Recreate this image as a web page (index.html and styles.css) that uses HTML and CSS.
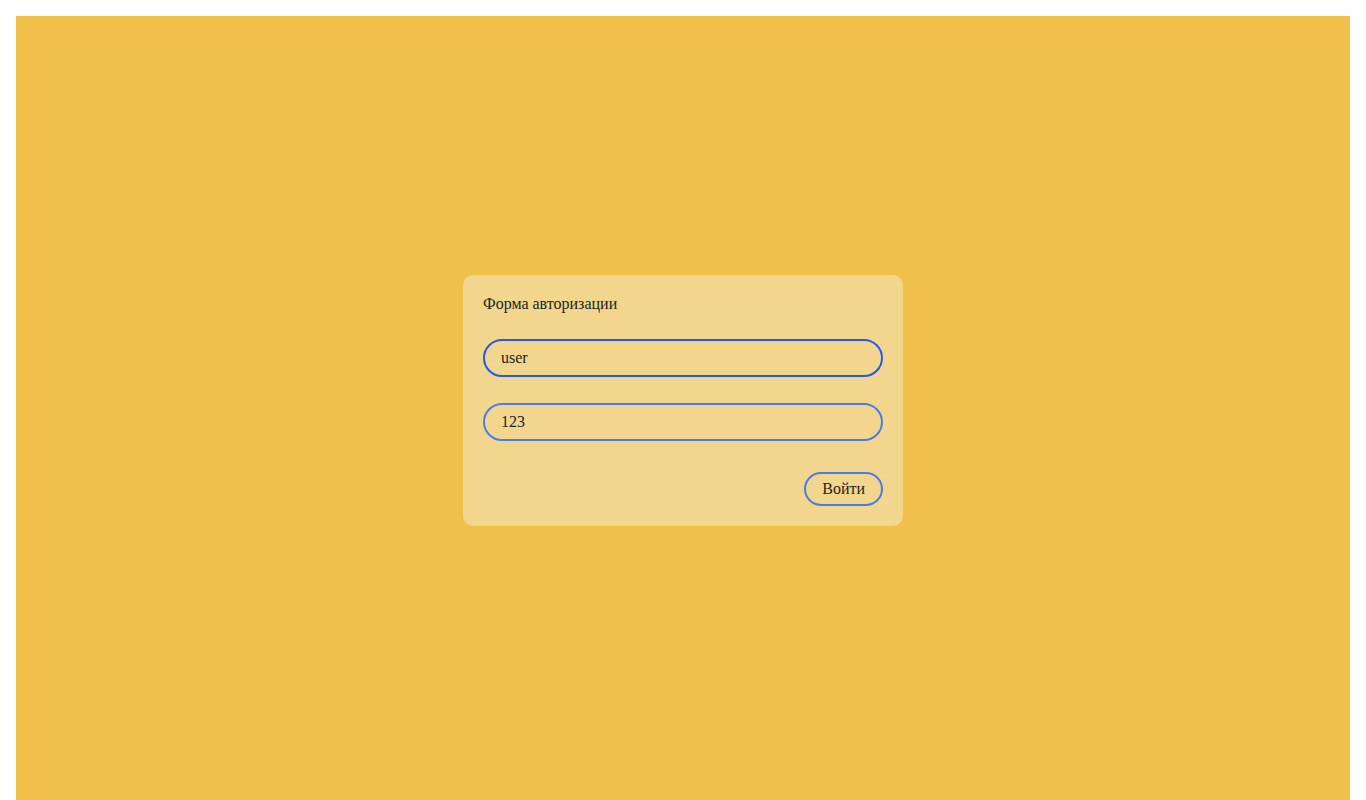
FILE: index.html
```html
<!DOCTYPE html>
<html lang="ru">
<head>
<meta charset="utf-8">
<title>Авторизация</title>
<link rel="stylesheet" href="styles.css">
</head>
<body>
<div class="page">
  <form class="card">
    <div class="title">Форма авторизации</div>
    <input class="field field-focus" type="text" value="user">
    <input class="field" type="text" value="123">
    <div class="actions">
      <button type="button" class="btn">Войти</button>
    </div>
  </form>
</div>
</body>
</html>
```
FILE: styles.css
```css
html, body {
  overflow: hidden;
}
body {
  margin: 16px 16px 0;
  font-family: "Liberation Serif", "Times New Roman", serif;
  font-size: 16px;
  color: #1e1e1e;
}
.page {
  box-sizing: border-box;
  min-height: calc(100vh - 16px);
  padding-bottom: 15px;
  background: #f0c04a;
  display: flex;
  align-items: center;
  justify-content: center;
}
.card {
  width: 440px;
  box-sizing: border-box;
  padding: 20px;
  background: #f2d68e;
  border-radius: 10px;
  display: flex;
  flex-direction: column;
  gap: 26px;
  margin: 0;
}
.title {
  line-height: 18.4px;
}
.field {
  box-sizing: border-box;
  width: 100%;
  height: 38px;
  padding: 8px 16px;
  border: 2px solid #4a7de8;
  border-radius: 19px;
  background: transparent;
  font: inherit;
  color: inherit;
  outline: none;
  margin: 0;
}
.field-focus {
  border-color: #2459ea;
}
.actions {
  display: flex;
  justify-content: flex-end;
  margin-top: 5px;
}
.btn {
  box-sizing: border-box;
  height: 34px;
  padding: 6px 16px;
  border: 2px solid #4a7de8;
  border-radius: 17px;
  background: transparent;
  font: inherit;
  color: inherit;
  line-height: 18px;
  cursor: pointer;
}
```
